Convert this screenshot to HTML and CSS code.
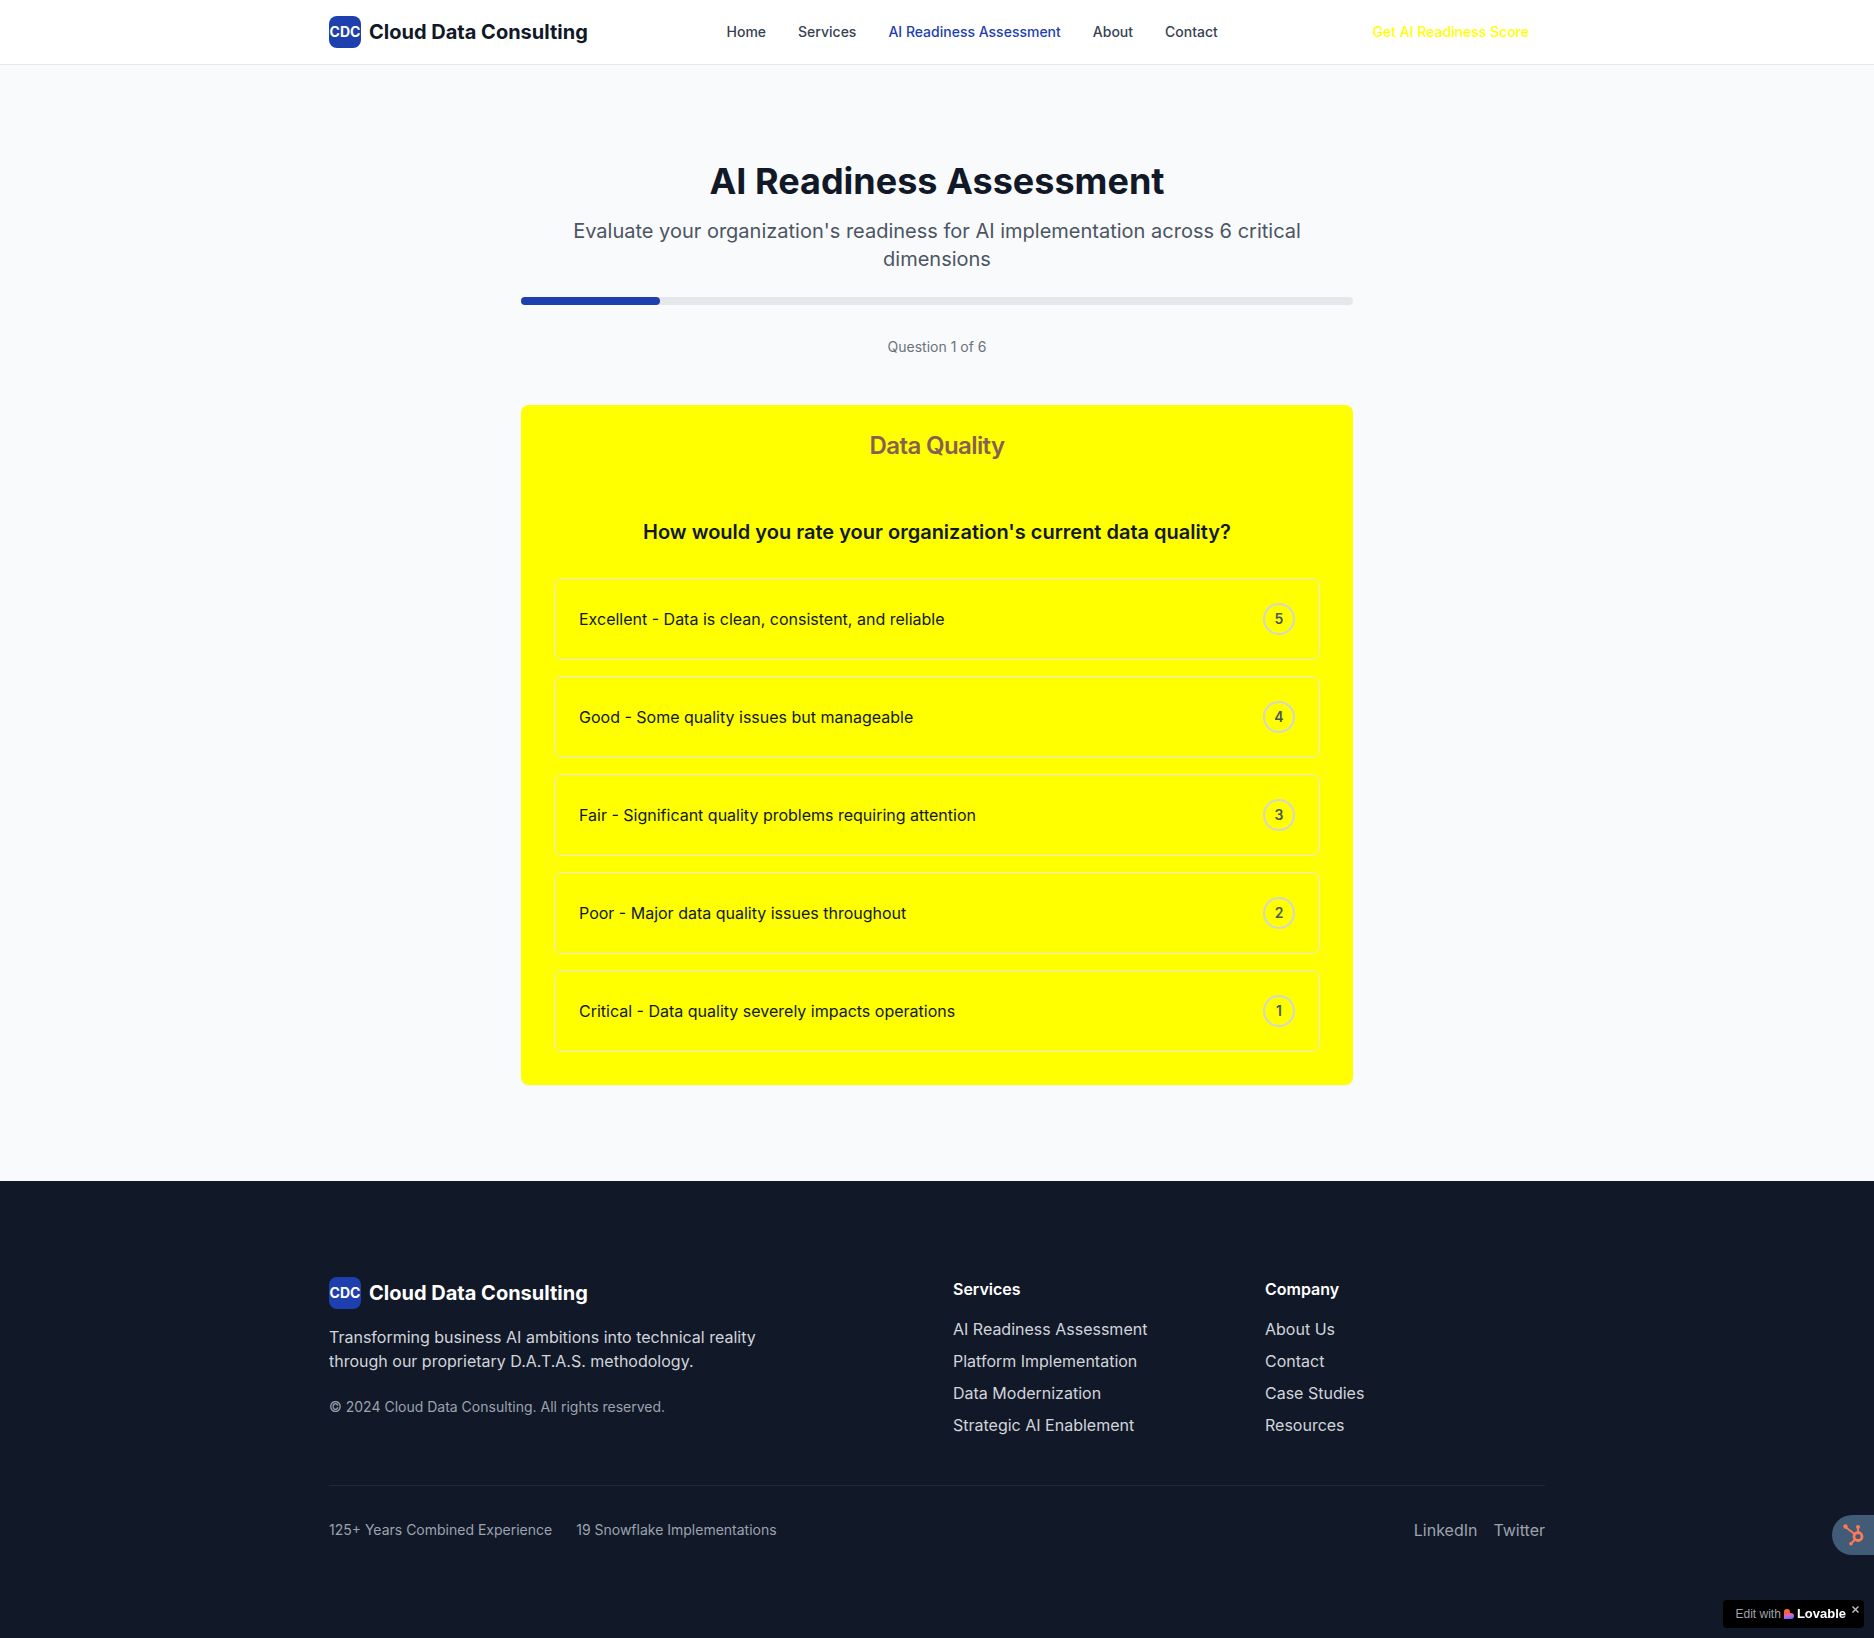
FILE: index.html
```html
<!DOCTYPE html>
<html lang="en">
<head>
<meta charset="utf-8">
<meta name="viewport" content="width=device-width, initial-scale=1">
<title>AI Readiness Assessment | Cloud Data Consulting</title>
<link rel="stylesheet" href="styles.css">
</head>
<body>
<header class="site-header">
  <div class="container header-row">
    <a class="brand" href="#"><span class="brand-mark">CDC</span><span class="brand-name">Cloud Data Consulting</span></a>
    <nav class="nav">
      <a href="#">Home</a>
      <a href="#">Services</a>
      <a class="active" href="#">AI Readiness Assessment</a>
      <a href="#">About</a>
      <a href="#">Contact</a>
    </nav>
    <button class="cta" type="button">Get AI Readiness Score</button>
  </div>
</header>

<main class="assessment">
  <h1>AI Readiness Assessment</h1>
  <p class="lead">Evaluate your organization's readiness for AI implementation across 6 critical dimensions</p>
  <div class="progress"><div class="progress-fill"></div></div>
  <p class="step">Question 1 of 6</p>
  <section class="card">
    <h2>Data Quality</h2>
    <h3>How would you rate your organization's current data quality?</h3>
    <div class="options">
      <button class="option" type="button"><span>Excellent - Data is clean, consistent, and reliable</span><span class="score">5</span></button>
      <button class="option" type="button"><span>Good - Some quality issues but manageable</span><span class="score">4</span></button>
      <button class="option" type="button"><span>Fair - Significant quality problems requiring attention</span><span class="score">3</span></button>
      <button class="option" type="button"><span>Poor - Major data quality issues throughout</span><span class="score">2</span></button>
      <button class="option" type="button"><span>Critical - Data quality severely impacts operations</span><span class="score">1</span></button>
    </div>
  </section>
</main>

<footer class="site-footer">
  <div class="container">
    <div class="footer-grid">
      <div class="about">
        <a class="brand" href="#"><span class="brand-mark">CDC</span><span class="brand-name">Cloud Data Consulting</span></a>
        <p class="tagline">Transforming business AI ambitions into technical reality through our proprietary D.A.T.A.S. methodology.</p>
        <p class="copyright">© 2024 Cloud Data Consulting. All rights reserved.</p>
      </div>
      <div>
        <h4>Services</h4>
        <ul>
          <li><a href="#">AI Readiness Assessment</a></li>
          <li><a href="#">Platform Implementation</a></li>
          <li><a href="#">Data Modernization</a></li>
          <li><a href="#">Strategic AI Enablement</a></li>
        </ul>
      </div>
      <div>
        <h4>Company</h4>
        <ul>
          <li><a href="#">About Us</a></li>
          <li><a href="#">Contact</a></li>
          <li><a href="#">Case Studies</a></li>
          <li><a href="#">Resources</a></li>
        </ul>
      </div>
    </div>
    <div class="footer-bottom">
      <div class="stats"><span>125+ Years Combined Experience</span><span>19 Snowflake Implementations</span></div>
      <div class="social"><a href="#">LinkedIn</a><a href="#">Twitter</a></div>
    </div>
  </div>
</footer>

<button class="hubspot" type="button" aria-label="HubSpot tools">
  <svg width="22" height="22" viewBox="0 0 22 22" fill="none" stroke="#ff7a59" aria-hidden="true">
    <circle cx="15" cy="12.500" r="4" stroke-width="2.800"/>
    <path d="M15 9V4M11.600 10L3 3.500M12 15.500L8.500 19" stroke-width="1.800"/>
    <g fill="#ff7a59" stroke="none"><circle cx="15" cy="3" r="2"/><circle cx="2.500" cy="2.500" r="2.200"/><circle cx="8" cy="19.700" r="1.800"/></g>
  </svg>
</button>

<aside class="lovable">
  <a href="#"><span class="edit">Edit with</span>
    <svg width="10" height="10" viewBox="0 0 10 10" aria-hidden="true">
      <defs><linearGradient id="heart" x1="0.300" y1="0" x2="0.500" y2="1"><stop offset="0" stop-color="#ff7a1a"/><stop offset="0.350" stop-color="#ff5a3c"/><stop offset="0.650" stop-color="#e15fd0"/><stop offset="1" stop-color="#4f73ff"/></linearGradient></defs>
      <path fill="url(#heart)" d="M3 0a3 3 0 0 1 3 3v1h1a3 3 0 0 1 0 6H0V3a3 3 0 0 1 3-3z"/>
    </svg>
    <span class="lovable-name">Lovable</span></a>
  <button class="close" type="button" aria-label="Close"><svg width="7" height="7" viewBox="0 0 7 7" stroke="#b9b9bd" stroke-width="1.500" aria-hidden="true"><path d="M.5.5l6 6M6.500.5l-6 6"/></svg></button>
</aside>
</body>
</html>
```
FILE: styles.css
```css
* { box-sizing: border-box; margin: 0; padding: 0; }
body {
  font-family: Inter, "Liberation Sans", sans-serif;
  font-size: 16px;
  line-height: 24px;
  color: #111827;
  background: #f9fafb;
  min-height: 100vh;
}
a { color: inherit; text-decoration: none; }
ul { list-style: none; }
button { font: inherit; color: inherit; background: none; border: 0; cursor: pointer; }

.container { max-width: 1280px; margin: 0 auto; padding: 0 32px; }

.site-header { background: #fff; border-bottom: 1px solid #e5e7eb; }
.header-row { height: 64px; display: flex; align-items: center; justify-content: space-between; }
.brand { display: flex; align-items: center; gap: 8px; }
.brand-mark {
  width: 32px; height: 32px; border-radius: 8px;
  display: flex; align-items: center; justify-content: center;
  background: #1e40af; color: #fff; font-size: 14px; font-weight: 700;
}
.brand-name { font-size: 20px; line-height: 28px; font-weight: 700; }
.nav { display: flex; gap: 32px; font-size: 14px; line-height: 20px; font-weight: 500; color: #374151; }
.nav .active { color: #1e40af; }
.cta { padding: 8px 16px; font-size: 14px; line-height: 20px; font-weight: 500; color: #ff0; border-radius: 6px; }

.assessment { max-width: 896px; margin: 0 auto; padding: 96px 32px; text-align: center; }
h1 { font-size: 36px; line-height: 40px; font-weight: 700; }
.lead { margin-top: 16px; font-size: 20px; line-height: 28px; color: #4b5563; }
.progress { margin-top: 24px; height: 8px; border-radius: 4px; background: #e5e7eb; }
.progress-fill { width: calc(100% / 6); height: 100%; border-radius: 4px; background: #1e40af; }
.step { margin-top: 32px; font-size: 14px; line-height: 20px; color: #6b7280; }

.card { margin-top: 48px; padding: 25px 33px 33px; border-radius: 8px; background: #ff0; box-shadow: 0 1px 2px rgba(0, 0, 0, .05); }
h2 { font-size: 24px; line-height: 32px; font-weight: 600; letter-spacing: -0.025em; color: #856153; }
h3 { margin-top: 56px; font-size: 20px; line-height: 28px; font-weight: 600; }
.options { margin-top: 32px; display: grid; gap: 16px; }
.option {
  display: flex; align-items: center; justify-content: space-between;
  padding: 24px; border: 1px solid #e5e7eb; border-radius: 8px; text-align: left;
}
.score {
  width: 32px; height: 32px; border: 2px solid #d1d5db; border-radius: 50%;
  display: flex; align-items: center; justify-content: center;
  font-size: 14px; line-height: 20px; font-weight: 600; color: #4b5563;
}

.site-footer { background: #111827; color: #fff; padding: 96px 0; }
.footer-grid { display: grid; grid-template-columns: repeat(4, 1fr); gap: 32px; }
.about { grid-column: span 2; }
.tagline { margin-top: 16px; max-width: 448px; color: #d1d5db; }
.copyright { margin-top: 24px; font-size: 14px; line-height: 20px; color: #9ca3af; }
h4 { font-size: 16px; line-height: 24px; font-weight: 600; }
.footer-grid ul { margin-top: 16px; display: grid; gap: 8px; color: #d1d5db; }
.footer-bottom {
  margin-top: 48px; padding-top: 32px; border-top: 1px solid #1f2937;
  display: flex; align-items: center; justify-content: space-between; color: #9ca3af;
}
.stats { display: flex; gap: 24px; font-size: 14px; line-height: 20px; }
.social { display: flex; gap: 16px; }

.hubspot {
  position: fixed; right: 0; bottom: 83px; width: 42px; height: 40px; padding-left: 11px;
  display: flex; align-items: center; background: #425b76; border-radius: 20px 0 0 20px;
}
.lovable {
  position: fixed; right: 10px; bottom: 10px; height: 28px; padding: 0 5px 0 13px;
  display: flex; gap: 6px; background: #000; border-radius: 4px;
  font-family: "Liberation Sans", Arial, sans-serif;
}
.lovable a { display: flex; align-items: center; gap: 3px; line-height: 28px; }
.edit { font-size: 12px; color: #a1a1aa; }
.lovable-name { font-size: 13px; font-weight: 700; color: #fff; }
.close { height: 18px; display: flex; align-items: center; }
```
